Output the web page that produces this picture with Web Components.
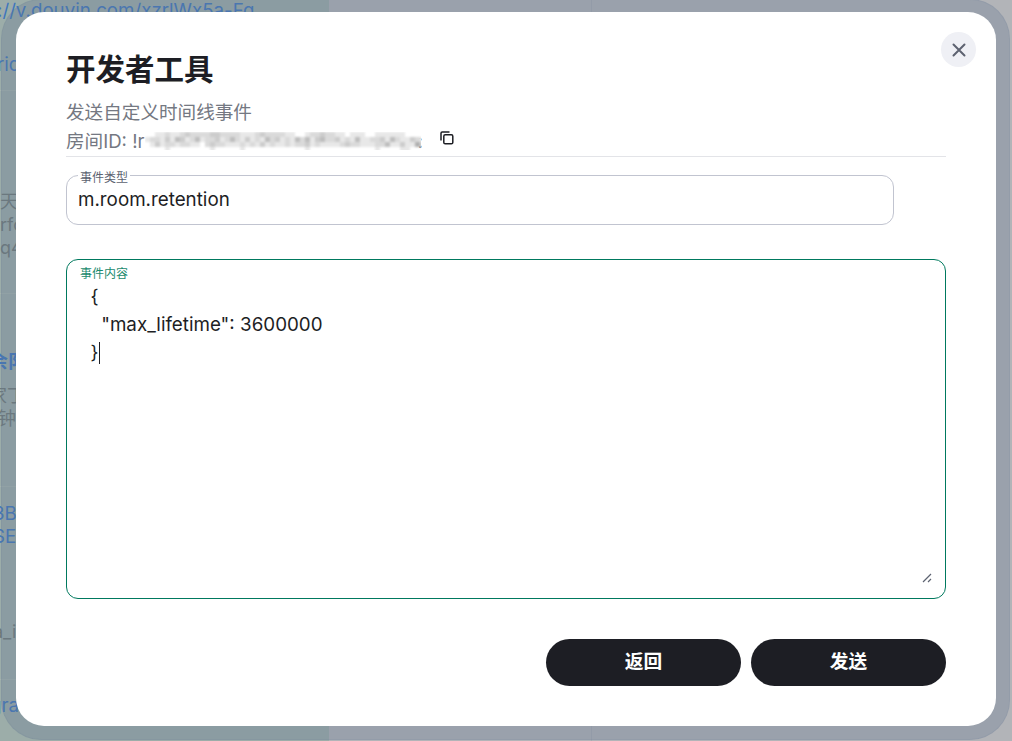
<!DOCTYPE html>
<html lang="zh">
<head>
<meta charset="utf-8">
<title>开发者工具</title>
<style>
  html, body { margin: 0; height: 100%; overflow: hidden; background: #b2b4b8; }
  body { font-family: Inter, "Noto Sans CJK SC", sans-serif; }
</style>
</head>
<body>
<room-page></room-page>
<dev-tools-dialog></dev-tools-dialog>

<script>
class RoomPage extends HTMLElement {
    constructor() {
        super();
        let shadowRoot = this.attachShadow({mode: 'open'});
        shadowRoot.innerHTML = `
        <style>
            :host {
                display: flex;
                height: 741px;
                overflow: hidden;
                font-family: Inter, "Noto Sans CJK SC", sans-serif;
            }
            .timeline {
                width: 329px;
                background: #9cada9;
                flex: none;
                white-space: nowrap;
                font-size: 18.72px;
                overflow: hidden;
            }
            .center {
                width: 262px;
                flex: none;
                background: #b2b4b8;
                border-right: 1px solid #a8abb2;
            }
            .rest { flex: 1; background: #b2b4b8; }
            p { margin: 0; height: 23px; line-height: 23px; }
            .link { color: #3f76bd; }
            .muted { color: #6f7977; font-size: 18px; }
            .sep { height: 1px; background: #a5b3ae; }
            b { font-weight: 700; }
        </style>
        <div class="timeline">
            <p class="link" style="margin:-1px 0 0 -3px">://v.douyin.com/xzrlWx5a-Fq</p>
            <p class="link" style="margin:31px 0 0 -3px">rid</p>
            <div class="sep" style="margin-top:14px"></div>
            <p class="muted" style="margin-top:99px">天</p>
            <p class="muted">rfo</p>
            <p class="muted">q4</p>
            <div class="sep" style="margin-top:34px"></div>
            <p class="link" style="margin:56px 0 0 -11px"><b>余阝</b></p>
            <p class="muted" style="margin:11px 0 0 -11px">家丁</p>
            <p class="muted" style="margin-left:-2px">钟</p>
            <div class="sep" style="margin-top:56px"></div>
            <p class="link" style="margin:15px 0 0 -7px">3B</p>
            <p class="link" style="margin-left:-7px">SE</p>
            <p class="muted" style="margin:72px 0 0 -7px">a_i</p>
            <div class="sep" style="margin-top:36px"></div>
            <p class="link" style="margin:14px 0 0 -10px">gra</p>
        </div>
        <div class="center"></div>
        <div class="rest"></div>
        `
    }
}

class MosaicBlur extends HTMLElement {
    // lightness of every mosaic cell, 0 = white, 9 = darkest
    static rows = [
        "0011211232222332222111232222110012232211011100111111000000",
        "1221314312412231242131214231214241342231214112231421132100",
        "0131221221102322111212131211212231211112322111224113115200",
        "0000100000000100000100000000000010000000000000100001100000"
    ];
    constructor() {
        super();
        let shadowRoot = this.attachShadow({mode: 'open'});
        let cell = 5;
        let rects = "";
        MosaicBlur.rows.forEach((row, y) => {
            [...row].forEach((v, x) => {
                if (v === "0") return;
                let g = 246 - Number(v) * 14;
                rects += `<rect x="${x * cell}" y="${y * cell}" width="${cell}" height="${cell}" fill="rgb(${g},${g},${g})"/>`;
            });
        });
        shadowRoot.innerHTML = `
        <style>
            :host { display: inline-block; width: 276px; height: 18px; line-height: 0; overflow: hidden; }
            svg { display: block; filter: blur(.9px); }
        </style>
        <svg width="290" height="20" viewBox="0 0 290 20">${rects}</svg>
        `
    }
}

class OutlinedField extends HTMLElement {
    constructor() {
        super();
        let shadowRoot = this.attachShadow({mode: 'open'});
        shadowRoot.innerHTML = `
        <style>
            :host {
                display: block;
                position: relative;
                box-sizing: border-box;
                border: 1px solid #c1c4d0;
                border-radius: 12px;
                padding: 10px 11px;
                font-size: 18.8px;
                line-height: 28px;
                color: #1d1e24;
            }
            :host([focused]) {
                border-color: #00795e;
                padding-top: 23px;
            }
            .label {
                position: absolute;
                left: 11px;
                top: -4px;
                padding: 0 2px;
                background: #fff;
                font-size: 12px;
                line-height: 12px;
                color: #5c6270;
            }
            :host([focused]) .label {
                top: 8px;
                background: none;
                color: #1a8a6e;
            }
        </style>
        <span class="label" id="label"></span>
        <slot></slot>
        `
        shadowRoot.getElementById('label').innerText = this.getAttribute("label");
    }
}

class PillButton extends HTMLElement {
    constructor() {
        super();
        let shadowRoot = this.attachShadow({mode: 'open'});
        shadowRoot.innerHTML = `
        <style>
            :host {
                display: flex;
                align-items: center;
                justify-content: center;
                box-sizing: border-box;
                width: 195px;
                height: 47px;
                padding-bottom: 6px;
                border-radius: 24px;
                background: #1d1e24;
                color: #fff;
                font-size: 18.72px;
                font-weight: 700;
            }
        </style>
        <slot></slot>
        `
    }
}

class DevToolsDialog extends HTMLElement {
    constructor() {
        super();
        let shadowRoot = this.attachShadow({mode: 'open'});
        shadowRoot.innerHTML = `
        <style>
            :host {
                position: fixed;
                inset: 0;
                display: block;
                font-family: Inter, "Noto Sans CJK SC", sans-serif;
            }
            .backdrop {
                position: absolute;
                inset: -1px 2px 1px 1px;
                box-sizing: border-box;
                display: flex;
                padding: 13px 14px 14px 15px;
                border-radius: 40px;
                background: rgba(100, 118, 147, .3);
                box-shadow: inset 0 0 0 1px rgba(100, 118, 147, .12);
            }
            .modal {
                position: relative;
                flex: 1;
                display: flex;
                flex-direction: column;
                box-sizing: border-box;
                padding: 36px 50px 40px;
                border-radius: 28px;
                background: #fff;
                color: #1d1e24;
            }
            h1 {
                margin: 0;
                font-size: 29.5px;
                line-height: 42px;
                font-weight: 700;
            }
            .sub {
                margin-top: 10px;
                font-size: 18.6px;
                line-height: 24px;
                color: #747882;
            }
            .room {
                display: flex;
                align-items: flex-start;
                height: 33px;
                padding-top: 3px;
                box-sizing: border-box;
                border-bottom: 1px solid #e3e4e8;
                font-size: 18.6px;
                line-height: 28px;
                color: #747882;
                white-space: pre;
            }
            .room svg { margin: 3px 0 0 16px; }
            .mosaic { margin: 5px -3px 0 0; }
            .close {
                position: absolute;
                top: 20px;
                right: 20px;
                width: 35px;
                height: 35px;
                border-radius: 50%;
                background: #eff0f5;
                display: flex;
                align-items: center;
                justify-content: center;
            }
            .type { margin: 18px 52px 0 0; height: 50px; }
            .content { margin-top: 34px; height: 340px; }
            .json { display: block; white-space: pre; margin-left: 2px; }
            .caret {
                display: inline-block;
                width: 1px;
                height: 22px;
                vertical-align: -5px;
                background: #1d1e24;
            }
            .grip { position: absolute; right: 13px; bottom: 15px; }
            .actions {
                display: flex;
                justify-content: flex-end;
                gap: 10px;
                margin-top: 40px;
            }
        </style>
        <div class="backdrop">
            <div class="modal">
                <h1>开发者工具</h1>
                <div class="sub">发送自定义时间线事件</div>
                <div class="room"><span>房间ID: !r</span><mosaic-blur class="mosaic"></mosaic-blur><span>:</span><svg width="16" height="16" viewBox="0 0 16 16" fill="none" stroke="#1d1e24" stroke-width="1.5"><path d="M2 10.5V3.2C2 2.5 2.5 2 3.2 2h7.3"/><rect x="4.8" y="4.8" width="9" height="9" rx="1.4"/></svg></div>
                <outlined-field class="type" label="事件类型">m.room.retention</outlined-field>
                <outlined-field class="content" label="事件内容" focused><span class="json">  {
    "max_lifetime": 3600000
  }<span class="caret"></span></span><svg class="grip" width="10" height="10" viewBox="0 0 10 10" stroke="#5c6270" stroke-width="1.2"><path d="M1 9 9 1M6 9 9 6"/></svg></outlined-field>
                <div class="actions">
                    <pill-button>返回</pill-button>
                    <pill-button>发送</pill-button>
                </div>
                <div class="close"><svg width="14" height="14" viewBox="0 0 14 14" stroke="#5d6270" stroke-width="2" stroke-linecap="round"><path d="M1.5 1.5l11 11M12.5 1.5l-11 11"/></svg></div>
            </div>
        </div>
        `
    }
}

customElements.define("room-page", RoomPage);
customElements.define("mosaic-blur", MosaicBlur);
customElements.define("outlined-field", OutlinedField);
customElements.define("pill-button", PillButton);
customElements.define("dev-tools-dialog", DevToolsDialog);
</script>
</body>
</html>
